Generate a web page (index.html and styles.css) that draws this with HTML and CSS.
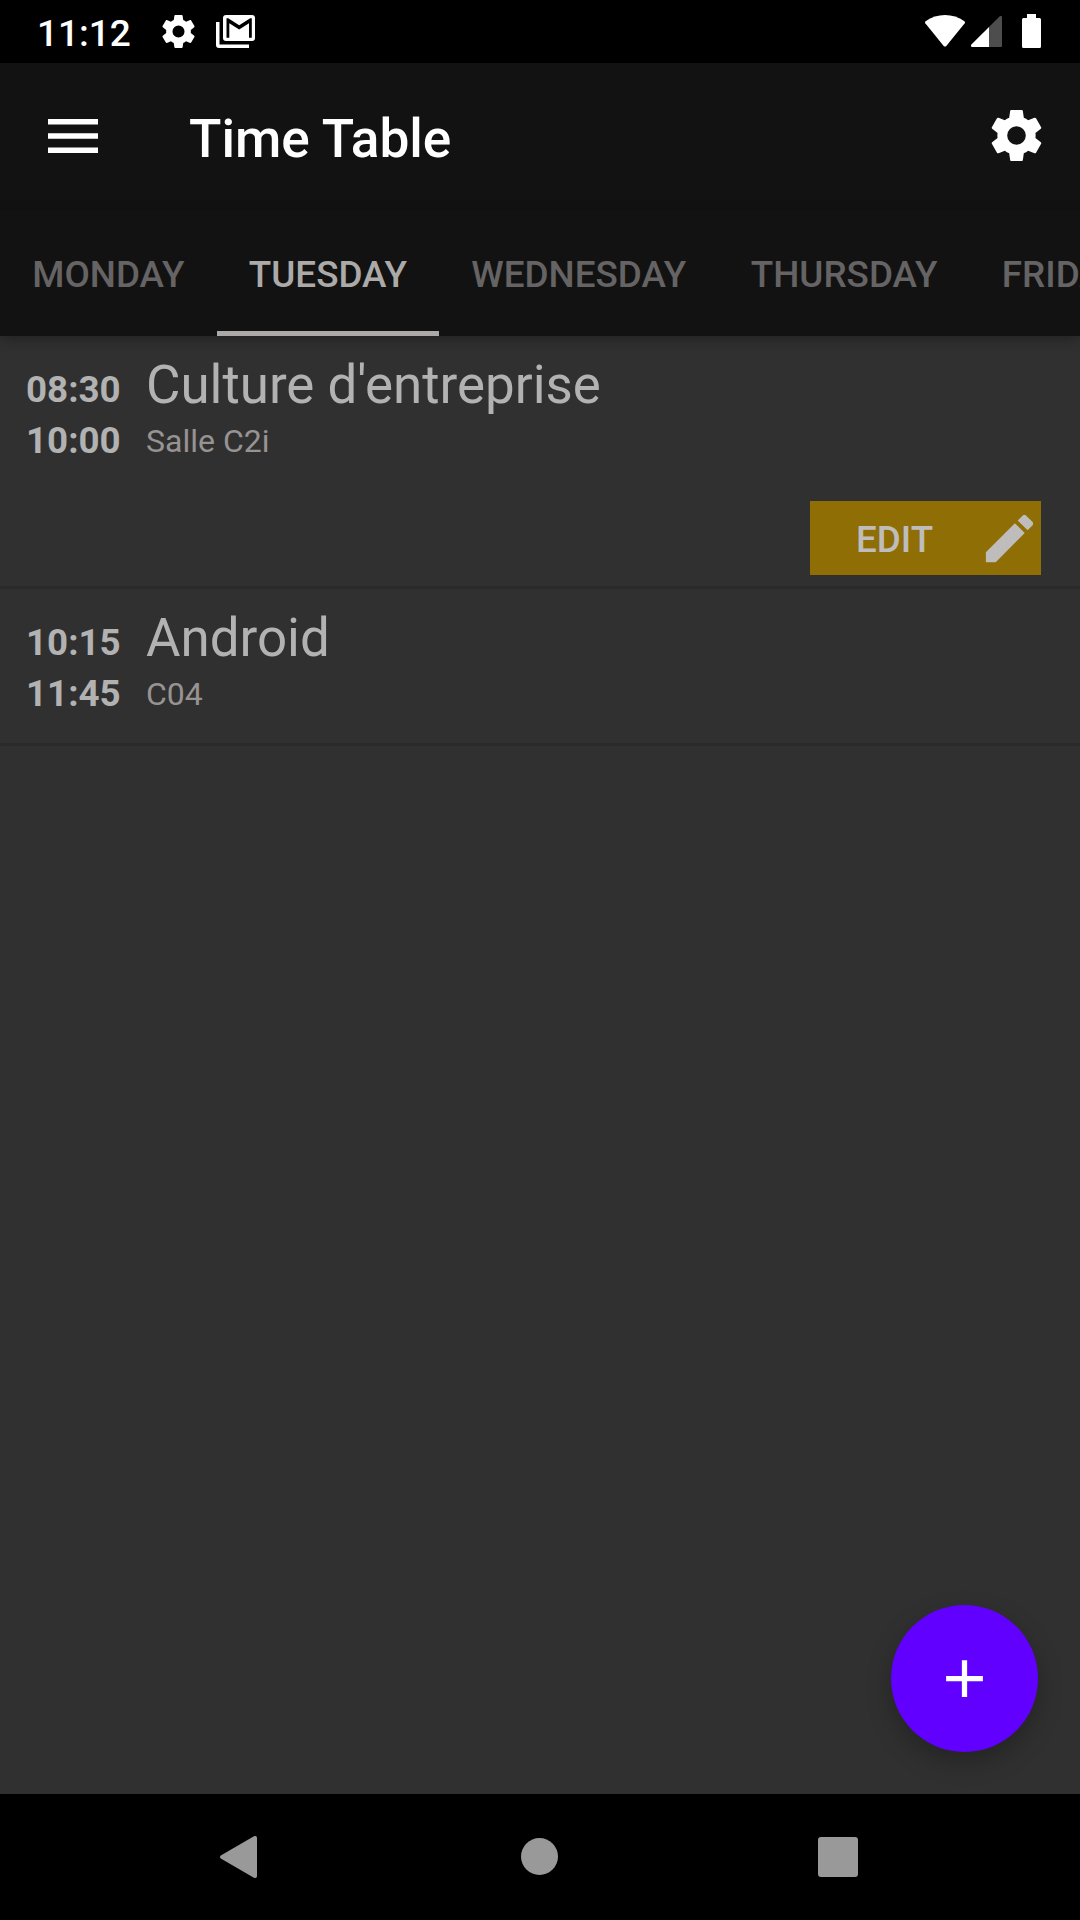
FILE: index.html
```html
<!DOCTYPE html>
<html lang="en">
<head>
<meta charset="utf-8">
<title>Time Table</title>
<link rel="stylesheet" href="styles.css">
</head>
<body>
<svg class="defs" aria-hidden="true">
  <symbol id="gear" viewBox="2 2 20 20">
    <path d="M19.43 12.98c.04-.32.07-.64.07-.98s-.03-.66-.07-.98l2.11-1.65c.19-.15.24-.42.12-.64l-2-3.46c-.12-.22-.39-.3-.61-.22l-2.49 1c-.52-.4-1.08-.73-1.69-.98l-.38-2.65C14.46 2.18 14.25 2 14 2h-4c-.25 0-.46.18-.49.42l-.38 2.65c-.61.25-1.17.59-1.69.98l-2.49-1c-.23-.09-.49 0-.61.22l-2 3.46c-.13.22-.07.49.12.64l2.11 1.65c-.04.32-.07.65-.07.98s.03.66.07.98l-2.11 1.65c-.19.15-.24.42-.12.64l2 3.46c.12.22.39.3.61.22l2.49-1c.52.4 1.08.73 1.69.98l.38 2.65c.03.24.24.42.49.42h4c.25 0 .46-.18.49-.42l.38-2.65c.61-.25 1.17-.59 1.69-.98l2.49 1c.23.09.49 0 .61-.22l2-3.46c.12-.22.07-.49-.12-.64l-2.11-1.65zM12 15.65a3.65 3.65 0 1 1 0-7.3 3.65 3.65 0 0 1 0 7.3z"/>
  </symbol>
</svg>
<div class="screen">
  <header class="status">
    <span class="clock">11:12</span>
    <svg class="status-gear"><use href="#gear"/></svg>
    <svg class="status-mail" viewBox="0 0 39 33">
      <path d="M0 7h3.500v22.500H33V33H3a3 3 0 0 1-3-3z"/>
      <path fill-rule="evenodd" d="M10 0h26a3 3 0 0 1 3 3v20a3 3 0 0 1-3 3H10a3 3 0 0 1-3-3V3a3 3 0 0 1 3-3zM10.500 3.200V22.700h2.800V8.200L23.200 14.500l9.800-6.300V22.700H35.800V3.200h-1.600L23.200 10.200 12.200 3.200z"/>
    </svg>
    <span class="spacer"></span>
    <svg class="wifi" viewBox="0 0 40 32"><path d="M.6 6.3C12-2 28-2 39.400 6.300c.7.6.8 1.300.3 2L21.300 31c-.7.800-1.900.800-2.600 0L.3 8.300c-.5-.7-.4-1.400.3-2z"/></svg>
    <svg class="signal" viewBox="0 0 31 31"><path class="dim" d="M18 11 28.500.5C29.500-.3 31 0 31 1.500V30a1 1 0 0 1-1 1H18z"/><path d="M18 11v20H1C0 31-.4 29.500.4 28.600z"/></svg>
    <svg class="battery" viewBox="0 0 19 34"><path d="M5 0h9v4h3.500A1.500 1.500 0 0 1 19 5.500v27a1.500 1.500 0 0 1-1.500 1.500h-16A1.500 1.500 0 0 1 0 32.500v-27A1.500 1.500 0 0 1 1.500 4H5z"/></svg>
  </header>

  <div class="appbar">
    <svg class="menu" viewBox="0 0 50 34"><path d="M0 0h50v5.500H0zM0 14.200h50v5.500H0zM0 28.400h50v5.500H0z"/></svg>
    <h1>Time Table</h1>
    <svg class="settings"><use href="#gear"/></svg>
  </div>

  <nav class="tabs">
    <span class="tab">MONDAY</span>
    <span class="tab active">TUESDAY</span>
    <span class="tab">WEDNESDAY</span>
    <span class="tab">THURSDAY</span>
    <span class="tab">FRIDAY</span>
  </nav>

  <main class="content">
    <article class="lesson expanded">
      <div class="times"><span>08:30</span><span>10:00</span></div>
      <div class="info"><h2>Culture d'entreprise</h2><p>Salle C2i</p></div>
      <button class="edit">
        <span>EDIT</span>
        <svg viewBox="0 0 24 24"><path d="M3 17.250V21h3.750L17.810 9.940l-3.750-3.750L3 17.250zM20.710 7.040c.39-.39.39-1.020 0-1.410l-2.340-2.340c-.39-.39-1.020-.39-1.410 0l-1.830 1.830 3.750 3.750 1.830-1.830z"/></svg>
      </button>
    </article>
    <article class="lesson">
      <div class="times"><span>10:15</span><span>11:45</span></div>
      <div class="info"><h2>Android</h2><p>C04</p></div>
    </article>
    <button class="fab" aria-label="Add">
      <svg viewBox="0 0 24 24"><path d="M19 13h-6v6h-2v-6H5v-2h6V5h2v6h6v2z"/></svg>
    </button>
  </main>

  <footer class="navbar">
    <svg class="back" viewBox="0 0 37 42"><path d="M33.500.4C35-.5 37 0 37 2v38c0 2-2 2.500-3.500 1.600L1.200 22.800c-1.600-1-1.600-2.600 0-3.600z"/></svg>
    <span class="home"></span>
    <span class="recent"></span>
  </footer>
</div>
</body>
</html>
```
FILE: styles.css
```css
* { box-sizing: border-box; }

body {
  margin: 0;
  background: #000;
  font-family: Roboto, "Liberation Sans", sans-serif;
}

h1, h2, p { margin: 0; font-weight: 400; }
button { border: 0; padding: 0; font-family: inherit; }
svg { display: block; flex: none; fill: #fff; }
.defs { position: absolute; width: 0; height: 0; }

.screen {
  display: flex;
  flex-direction: column;
  width: 1080px;
  height: 1920px;
  overflow: hidden;
}

/* System status bar */
.status {
  display: flex;
  align-items: center;
  height: 63px;
  padding: 0 39px 0 37px;
  background: #000;
  color: #fff;
}
.clock {
  width: 124.5px;
  padding-top: 3px;
  font-size: 37px;
  font-weight: 500;
  line-height: 59px;
}
.status-gear { width: 33px; height: 33px; margin-right: 21.5px; }
.status-mail { width: 39px; height: 33px; }
.spacer { flex: 1; }
.wifi { width: 40px; height: 32px; margin: 0 6.5px 2px 0; }
.signal { width: 31px; height: 31px; margin-right: 20px; }
.signal .dim { fill: #4d4d4d; }
.battery { width: 19px; height: 34px; margin-bottom: 1px; }

/* App bar */
.appbar {
  display: flex;
  align-items: center;
  height: 147px;
  padding: 0 38px 0 48px;
  background: #121212;
  color: #fff;
}
.menu { width: 50px; height: 34px; margin: 0 91px 1px 0; }
.appbar h1 {
  flex: 1;
  padding-top: 5px;
  font-size: 53.2px;
  font-weight: 500;
  line-height: 62px;
}
.settings { width: 51px; height: 51px; margin-bottom: 2px; }

/* Day tabs */
.tabs {
  display: flex;
  position: relative;
  z-index: 1;
  height: 126px;
  background: #121212;
  box-shadow: 0 3px 12px rgba(0, 0, 0, .3);
}
.tab {
  flex: none;
  height: 126px;
  padding: 3px 32.2px 0;
  color: #656364;
  font-size: 36.85px;
  font-weight: 500;
  line-height: 123px;
}
.tab.active {
  border-bottom: 5px solid #acaaa8;
  color: #acaaa8;
}

/* Lessons */
.content {
  position: relative;
  flex: 1;
  background: #303030;
}
.lesson {
  display: grid;
  grid-template-columns: 120px 1fr;
  grid-template-rows: 154px;
  padding: 0 39px 0 26px;
  border-bottom: 3px solid #2a2a2a;
  color: #b2b2b2;
}
.expanded { grid-template-rows: 165px 85px; }
.times {
  display: flex;
  flex-direction: column;
  padding-top: 28px;
  font-size: 36.75px;
  font-weight: 700;
  line-height: 51px;
}
.info { padding-top: 18px; }
.info h2 { font-size: 52.9px; line-height: 62px; }
.info p { color: #989393; font-size: 32px; line-height: 51px; }
.edit {
  display: flex;
  grid-column: 2;
  align-items: center;
  justify-content: space-between;
  justify-self: end;
  width: 231px;
  height: 74px;
  padding: 0 0 0 46px;
  background: #8e6e05;
  color: #bfbdbc;
  font-size: 36.75px;
  font-weight: 500;
}
.edit span { padding-top: 2px; }
.edit svg { width: 63px; height: 63px; fill: #bfbdbc; }

.fab {
  position: absolute;
  right: 42px;
  bottom: 42px;
  display: flex;
  align-items: center;
  justify-content: center;
  width: 147px;
  height: 147px;
  border-radius: 50%;
  background: #6200ff;
  box-shadow: 0 10px 24px rgba(0, 0, 0, .25);
}
.fab svg { width: 63px; height: 63px; }

/* System navigation */
.navbar {
  display: flex;
  align-items: center;
  justify-content: space-between;
  height: 126px;
  padding: 0 222px 0 220px;
  background: #000;
}
.back { width: 37px; height: 42px; fill: #999; }
.home { width: 37px; height: 37px; margin: 0 0 1px 3px; border-radius: 50%; background: #999; }
.recent { width: 40px; height: 40px; border-radius: 3px; background: #999; }
```
